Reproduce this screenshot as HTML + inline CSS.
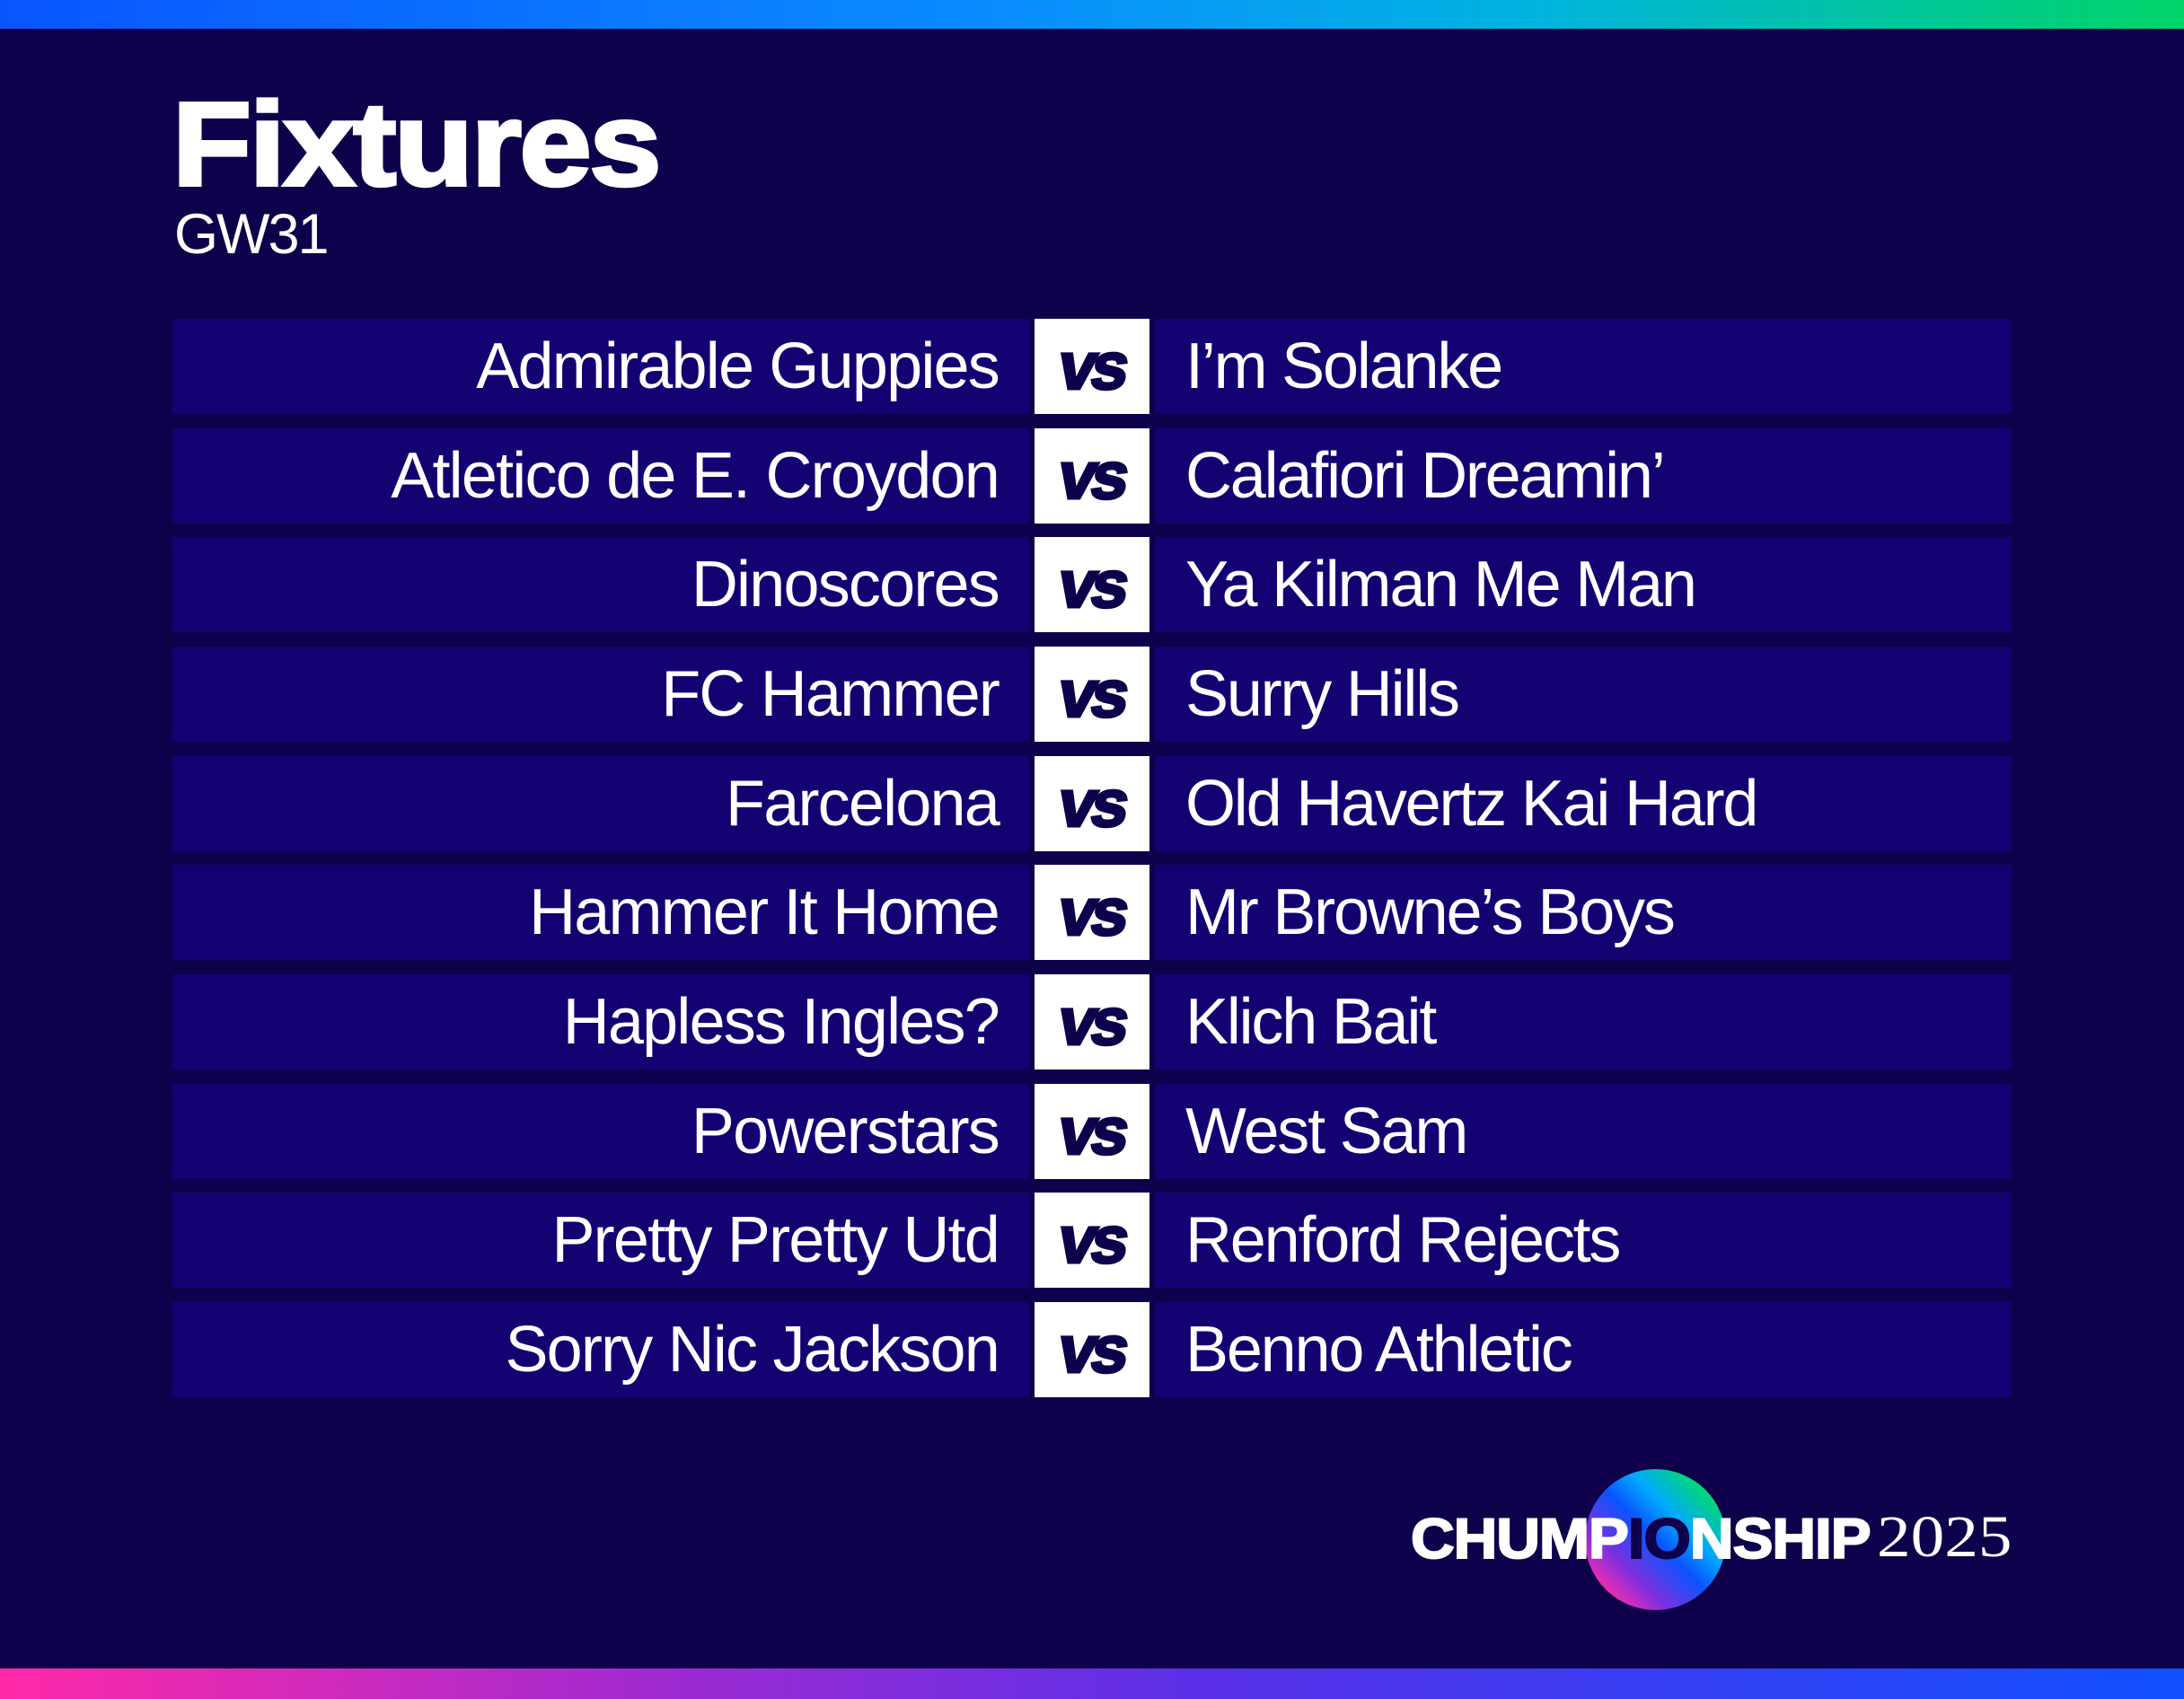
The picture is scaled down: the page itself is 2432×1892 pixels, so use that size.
<!DOCTYPE html>
<html><head><meta charset="utf-8"><style>
*{margin:0;padding:0;box-sizing:border-box}
body{width:2432px;height:1892px;background:#0e004a;position:relative;overflow:hidden;font-family:"Liberation Sans",sans-serif;color:#fff}
.top{position:absolute;left:0;top:0;width:2432px;height:32px;background:linear-gradient(90deg,#0a55ff 0%,#0a8cff 45%,#00b4e0 70%,#00d468 100%)}
.bot{position:absolute;left:0;top:1858px;width:2432px;height:34px;background:linear-gradient(90deg,#ff2aa8 0%,#a02ad0 30%,#5a30e8 55%,#1050ff 100%)}
h1{position:absolute;left:192px;top:95px;font-size:132px;font-weight:900;line-height:1;transform:scaleX(1.09);transform-origin:left;letter-spacing:-2px;-webkit-text-stroke:4px #fff}
.gw{position:absolute;left:194px;top:230px;font-size:63px;line-height:1;letter-spacing:-2px}
.row{position:absolute;left:192px;width:2048px;height:106px}
.l,.r,.v{position:absolute;top:0;height:106px;white-space:nowrap}
.l{left:0;width:954px;background:#150072;text-align:right;padding-right:34px;font-size:72px;line-height:106px;letter-spacing:-1.8px}
.v{left:960px;width:128px;background:#fff;color:#0e004a;font-size:74px;font-weight:900;text-align:center;line-height:106px;letter-spacing:-5px}
.v span{display:inline-block;transform:skewX(-10deg);-webkit-text-stroke:3px #0e004a}
.r{left:1094px;width:954px;background:#150072;padding-left:34px;font-size:72px;line-height:106px;letter-spacing:-2.2px}
.circ{position:absolute;left:1765px;top:1636px;width:157px;height:157px;border-radius:50%;background:linear-gradient(225deg,#00e060 12%,#00a8ff 35%,#0a55ff 50%,#7a30e0 70%,#ff2aa8 88%)}
.ch{position:absolute;left:1571px;top:1683px;font-size:63px;font-weight:900;line-height:1;transform:scaleX(1.07);transform-origin:left;-webkit-text-stroke:2px #fff;letter-spacing:-1px;white-space:nowrap}
.ch b{color:#0e004a;-webkit-text-stroke:2px #0e004a}
.yr{position:absolute;left:2090px;top:1679px;font-family:"Liberation Serif",serif;font-size:66px;line-height:1;transform:scaleX(1.14);transform-origin:left}
</style></head><body>
<div class="top"></div>
<h1>Fixtures</h1>
<div class="gw">GW31</div>

<div class="row" style="top:355px"><div class="l">Admirable Guppies</div><div class="v"><span>vs</span></div><div class="r">I’m Solanke</div></div>
<div class="row" style="top:477px"><div class="l">Atletico de E. Croydon</div><div class="v"><span>vs</span></div><div class="r">Calafiori Dreamin’</div></div>
<div class="row" style="top:598px"><div class="l">Dinoscores</div><div class="v"><span>vs</span></div><div class="r">Ya Kilman Me Man</div></div>
<div class="row" style="top:720px"><div class="l">FC Hammer</div><div class="v"><span>vs</span></div><div class="r">Surry Hills</div></div>
<div class="row" style="top:842px"><div class="l">Farcelona</div><div class="v"><span>vs</span></div><div class="r">Old Havertz Kai Hard</div></div>
<div class="row" style="top:963px"><div class="l">Hammer It Home</div><div class="v"><span>vs</span></div><div class="r">Mr Browne’s Boys</div></div>
<div class="row" style="top:1085px"><div class="l">Hapless Ingles?</div><div class="v"><span>vs</span></div><div class="r">Klich Bait</div></div>
<div class="row" style="top:1207px"><div class="l">Powerstars</div><div class="v"><span>vs</span></div><div class="r">West Sam</div></div>
<div class="row" style="top:1328px"><div class="l">Pretty Pretty Utd</div><div class="v"><span>vs</span></div><div class="r">Renford Rejects</div></div>
<div class="row" style="top:1450px"><div class="l">Sorry Nic Jackson</div><div class="v"><span>vs</span></div><div class="r">Benno Athletic</div></div>

<div class="circ"></div>
<div class="ch">CHUMP<b>IO</b>NSHIP</div>
<div class="yr">2025</div>
<div class="bot"></div>
</body></html>
